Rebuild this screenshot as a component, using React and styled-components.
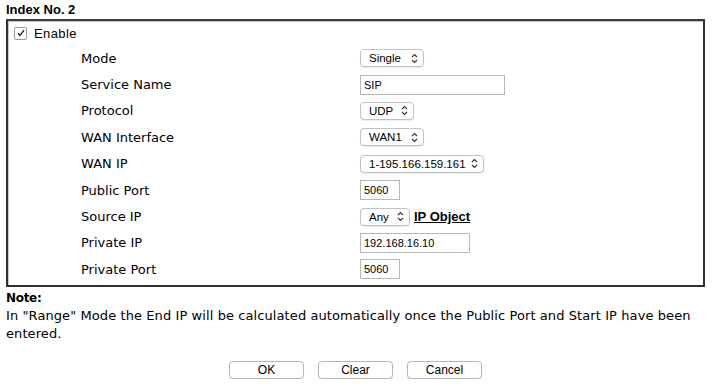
import React from "react";
import styled, { createGlobalStyle } from "styled-components";

const GlobalStyle = createGlobalStyle`
  body {
    margin: 0;
    background: #fff;
    font-family: "DejaVu Sans", Verdana, sans-serif;
    color: #000;
  }
`;

const Page = styled.div`
  width: 712px;
  padding: 0 7px 0 6px;
  box-sizing: border-box;
`;

const Heading = styled.div`
  font-family: "Liberation Sans", Arial, sans-serif;
  font-weight: 700;
  font-size: 13px;
  height: 19px;
  line-height: 19px;
`;

const Box = styled.div`
  border: 2px solid #2f2f2f;
  border-top-color: #3a3a3a;
  box-shadow: inset 1px 1px 0 #c8c8c8;
  padding: 0 0 2px 0;
`;

const EnableRow = styled.label`
  display: flex;
  align-items: center;
  gap: 7px;
  height: 24px;
  padding-left: 6px;
  font-family: "Liberation Sans", Arial, sans-serif;
  font-size: 13px;
  letter-spacing: 0.4px;
`;

const Check = styled.span`
  width: 11px;
  height: 11px;
  border: 1px solid #9a9a9a;
  border-radius: 2px;
  display: inline-flex;
  align-items: center;
  justify-content: center;
  background: #fff;
`;

const Row = styled.div`
  display: grid;
  grid-template-columns: 352px 1fr;
  align-items: center;
  height: 26.4px;
`;

const Label = styled.div`
  padding-left: 73px;
  font-size: 13px;
`;

const Cell = styled.div`
  display: flex;
  align-items: center;
  gap: 4px;
`;

const SelectBox = styled.div`
  width: ${(p) => p.w}px;
  height: 18px;
  box-sizing: border-box;
  border: 1px solid #c2c2c2;
  border-radius: 4px;
  background: #fff;
  display: flex;
  align-items: center;
  justify-content: space-between;
  padding: 0 5px 0 8px;
  font-family: "Liberation Sans", Arial, sans-serif;
  font-size: 11.5px;
  box-shadow: 0 1px 1px rgba(0, 0, 0, 0.08);
`;

const Input = styled.div`
  width: ${(p) => p.w}px;
  height: 20px;
  box-sizing: border-box;
  border: 1px solid #b8b8b8;
  background: #fff;
  display: flex;
  align-items: center;
  padding-left: 3px;
  font-family: "Liberation Sans", Arial, sans-serif;
  font-size: 11px;
`;

const ObjLink = styled.a`
  font-family: "Liberation Sans", Arial, sans-serif;
  font-weight: 700;
  font-size: 13px;
  color: #000;
  text-decoration: underline;
`;

const NoteTitle = styled.div`
  font-family: "DejaVu Sans", Verdana, sans-serif;
  font-weight: 700;
  font-size: 12px;
  height: 20px;
  line-height: 22px;
  letter-spacing: -0.3px;
`;

const NoteText = styled.p`
  margin: 0;
  font-size: 13px;
  line-height: 18px;
  letter-spacing: 0.09px;
`;

const Buttons = styled.div`
  display: flex;
  justify-content: center;
  gap: 14px;
  margin-top: 18px;
`;

const Button = styled.button`
  width: 75px;
  height: 18px;
  border: 1px solid #b5b5b5;
  border-radius: 4px;
  background: #fff;
  font-family: "Liberation Sans", Arial, sans-serif;
  font-size: 12px;
  padding: 0;
  box-shadow: 0 1px 1px rgba(0, 0, 0, 0.08);
`;

const Chevrons = () => (
  <svg width="7" height="11" viewBox="0 0 7 11">
    <path d="M1 4 L3.5 1.5 L6 4 M1 7 L3.5 9.5 L6 7" fill="none" stroke="#333" strokeWidth="1.1" />
  </svg>
);

const Select = ({ w, children }) => (
  <SelectBox w={w}>
    <span>{children}</span>
    <Chevrons />
  </SelectBox>
);

const rows = [
  ["Mode", <Select w={64}>Single</Select>],
  ["Service Name", <Input w={145}>SIP</Input>],
  ["Protocol", <Select w={54}>UDP</Select>],
  ["WAN Interface", <Select w={64}>WAN1</Select>],
  ["WAN IP", <Select w={124}>1-195.166.159.161</Select>],
  ["Public Port", <Input w={40}>5060</Input>],
  [
    "Source IP",
    <>
      <Select w={50}>Any</Select>
      <ObjLink>IP Object</ObjLink>
    </>,
  ],
  ["Private IP", <Input w={110}>192.168.16.10</Input>],
  ["Private Port", <Input w={40}>5060</Input>],
];

export default function App() {
  return (
    <Page>
      <GlobalStyle />
      <Heading>Index No. 2</Heading>
      <Box>
        <EnableRow>
          <Check>
            <svg width="8" height="8" viewBox="0 0 8 8">
              <path d="M1 4.2 L3 6.4 L7 1.2" fill="none" stroke="#222" strokeWidth="1.3" />
            </svg>
          </Check>
          Enable
        </EnableRow>
        {rows.map(([label, control]) => (
          <Row key={label}>
            <Label>{label}</Label>
            <Cell>{control}</Cell>
          </Row>
        ))}
      </Box>
      <NoteTitle>Note:</NoteTitle>
      <NoteText>
        In "Range" Mode the End IP will be calculated automatically once the Public Port and Start IP have been
        entered.
      </NoteText>
      <Buttons>
        <Button>OK</Button>
        <Button>Clear</Button>
        <Button>Cancel</Button>
      </Buttons>
    </Page>
  );
}
